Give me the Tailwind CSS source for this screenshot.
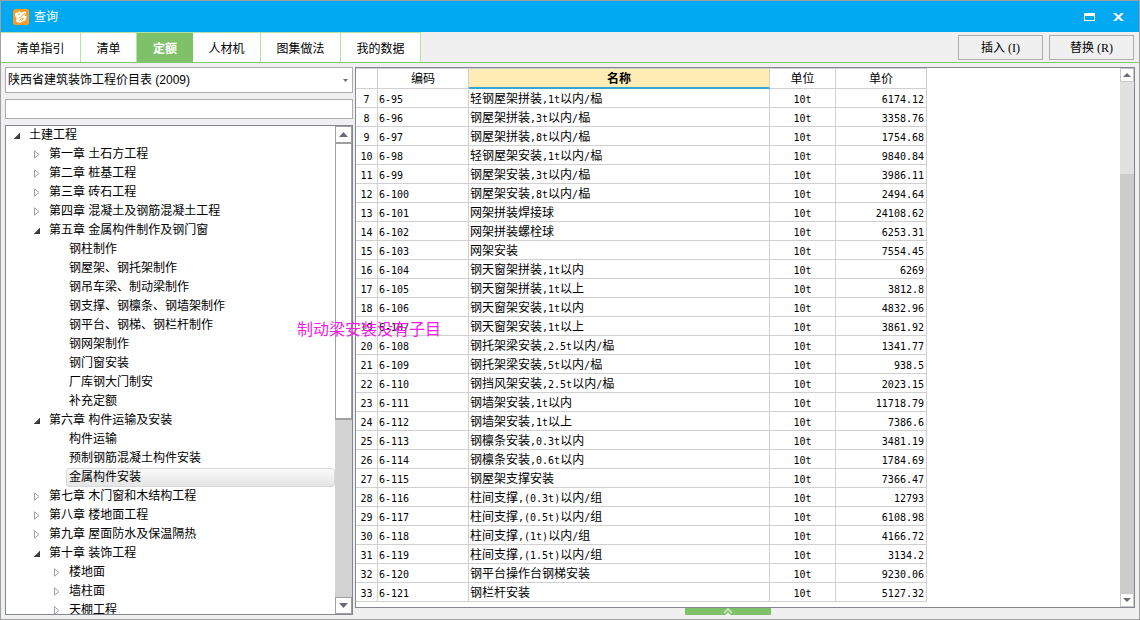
<!DOCTYPE html>
<html lang="zh-CN">
<head>
<meta charset="utf-8">
<title>查询</title>
<script src="https://cdn.jsdelivr.net/npm/@tailwindcss/browser@4"></script>
</head>
<body class="relative flex h-screen flex-col overflow-hidden border border-[#a0a0a0] bg-[#f0f0f0] font-['Liberation_Sans','Noto_Sans_CJK_SC',sans-serif] text-[12px] leading-[18px] text-black">

<header class="flex h-[31px] shrink-0 items-center bg-[#00a9f1] pr-[14px] pl-3 text-white">
  <svg class="h-4 w-4" viewBox="0 0 16 16" aria-hidden="true">
    <rect width="16" height="16" rx="2.5" fill="#fb9d25"/>
    <path d="M2 4.500 6.500 2.200 8 3.600 12 2.400l1.500 1.400-2.300 2.600 2.600 1-1.600 4.200L6.500 14 3 12.400l.6-3.600L2.200 7z" fill="#fff"/>
    <path d="M4.500 5.600 7 4.800M12 4.200 5.600 9.600M6 12l2.600-2.600 1.800.2L8 12" fill="none" stroke="#fb9d25" stroke-width=".9"/>
  </svg>
  <h1 class="ml-[5px]">查询</h1>
  <div class="ml-auto flex items-center gap-[18px]">
    <button type="button" aria-label="最大化"><svg class="block" width="11" height="8" viewBox="0 0 11 8"><path d="M0 0h11v8H0zM1 3v4h9V3z" fill="#fff" fill-rule="evenodd"/></svg></button>
    <button type="button" aria-label="关闭" class="mr-[1px]"><svg class="block" width="11" height="8" viewBox="0 0 11 8"><path d="M0 0h3l2.500 2.500L8 0h3L7 4l4 4H8L5.500 5.500 3 8H0l4-4z" fill="#fff"/></svg></button>
  </div>
</header>

<div class="flex h-[31px] shrink-0 items-stretch border-b border-[#7fc66d]">
  <nav class="flex border-t border-[#b5e3a6]">
    <button type="button" class="w-20 border-r border-[#b5e3a6] bg-white pt-[2px]">清单指引</button>
    <button type="button" class="w-14 border-r border-[#b5e3a6] bg-white pt-[2px]">清单</button>
    <button type="button" class="w-14 bg-[#7fc169] pt-[2px] font-bold text-white">定额</button>
    <button type="button" class="w-[68px] border-r border-[#b5e3a6] bg-white pt-[2px]">人材机</button>
    <button type="button" class="w-20 border-r border-[#b5e3a6] bg-white pt-[2px]">图集做法</button>
    <button type="button" class="w-20 border-r border-[#b5e3a6] bg-white pt-[2px]">我的数据</button>
  </nav>
  <div class="ml-auto flex gap-[6px] pt-[3px] pr-[5px] pb-[2px] font-['Liberation_Serif','Noto_Sans_CJK_SC',serif]">
    <button type="button" class="w-[85px] border border-[#adadad]">插入 (I)</button>
    <button type="button" class="w-[85px] border border-[#adadad]">替换 (R)</button>
  </div>
</div>

<main class="flex min-h-0 flex-1 gap-[2px] px-1 pt-1 pb-1">
  <section class="flex w-[348px] shrink-0 flex-col gap-[6px]">
    <div class="relative">
      <select aria-label="定额库" class="block h-[26px] w-full appearance-none border border-[#adadad] bg-white pl-[2px] outline-none">
        <option>陕西省建筑装饰工程价目表 (2009)</option>
      </select>
      <svg class="pointer-events-none absolute top-3 right-[5px]" width="5" height="3" viewBox="0 0 5 3"><path d="M0 0h5L2.500 3z" fill="#6b6b78"/></svg>
    </div>
    <input type="text" aria-label="搜索" class="h-5 w-full shrink-0 border border-[#adadad] bg-white px-1 outline-none">
    <div class="flex min-h-0 flex-1 border border-[#828790] bg-white">
      <ul id="tree" class="min-w-0 flex-1 overflow-hidden"></ul>
      <div class="flex w-[17px] flex-col bg-[#d3d3d3]">
        <button type="button" aria-label="向上" class="flex h-[17px] shrink-0 items-center justify-center border border-[#a0a0a0] bg-white"><svg width="9" height="5" viewBox="0 0 9 5"><path d="M4.500 0 9 5H0z" fill="#6b6b78"/></svg></button>
        <div class="h-[277px] shrink-0 border border-b-2 border-[#a0a0a0] bg-white"></div>
        <button type="button" aria-label="向下" class="mt-auto flex h-[17px] shrink-0 items-center justify-center border border-[#a0a0a0] bg-white"><svg width="9" height="5" viewBox="0 0 9 5"><path d="M0 0h9L4.500 5z" fill="#6b6b78"/></svg></button>
      </div>
    </div>
  </section>

  <section class="flex min-w-0 flex-1 flex-col">
    <div class="flex min-h-0 flex-1 border border-[#828790] bg-white">
      <div class="min-w-0 flex-1 overflow-hidden">
        <table class="w-[571px] table-fixed border-separate border-spacing-0 border-t border-[#d0d0d0] leading-4">
          <colgroup><col class="w-[22px]"><col class="w-[91px]"><col class="w-[301px]"><col class="w-[66px]"><col class="w-[91px]"></colgroup>
          <thead>
            <tr class="h-5">
              <th class="border-r border-b border-[#d0d0d0] p-0" aria-label="序号"></th>
              <th class="border-r border-b border-[#d0d0d0] p-0 pt-[1px] font-normal">编码</th>
              <th class="border-r border-b-2 border-r-[#d0d0d0] border-b-[#35a5d5] bg-[#ffedb5] p-0 pt-[2px] font-bold">名称</th>
              <th class="border-r border-b border-[#d0d0d0] p-0 pt-[1px] font-normal">单位</th>
              <th class="border-r border-b border-[#d0d0d0] p-0 pt-[1px] font-normal">单价</th>
            </tr>
          </thead>
          <tbody id="rows"></tbody>
        </table>
      </div>
      <div class="flex w-[14px] shrink-0 flex-col bg-[#e1e1e1]">
        <button type="button" aria-label="向上滚动" class="flex h-[14px] shrink-0 items-center justify-center border border-[#c8c8c8] bg-white"><svg width="8" height="4" viewBox="0 0 8 4"><path d="M4 0l4 4H0z" fill="#6b6b78"/></svg></button>
        <div class="h-[92px] shrink-0"></div>
        <div class="min-h-0 flex-1 bg-[#cbcbcb]"></div>
        <button type="button" aria-label="向下滚动" class="flex h-[14px] shrink-0 items-center justify-center border border-[#c8c8c8] bg-white"><svg width="8" height="4" viewBox="0 0 8 4"><path d="M0 0h8L4 4z" fill="#6b6b78"/></svg></button>
      </div>
    </div>
    <div class="flex h-[7px] shrink-0 justify-center pr-[34px]">
      <button type="button" aria-label="展开" class="flex w-[86px] justify-center bg-[#7fc169]"><svg width="10" height="7" viewBox="0 0 10 7"><path d="M1 5 5 1l4 4" fill="none" stroke="#d3ecca" stroke-width="1.500"/><path d="M2.500 7 5 4.300 7.500 7z" fill="#fff"/></svg></button>
    </div>
  </section>
</main>

<p class="pointer-events-none absolute top-[317px] left-[296px] text-[16px] leading-6 text-[#f01ee6]">制动梁安装没有子目</p>

<script>
// Tree entries: depth, state (o = open, c = closed, - = leaf, s = selected leaf), label
const tree = `0|o|土建工程
1|c|第一章 土石方工程
1|c|第二章 桩基工程
1|c|第三章 砖石工程
1|c|第四章 混凝土及钢筋混凝土工程
1|o|第五章 金属构件制作及钢门窗
2|-|钢柱制作
2|-|钢屋架、钢托架制作
2|-|钢吊车梁、制动梁制作
2|-|钢支撑、钢檩条、钢墙架制作
2|-|钢平台、钢梯、钢栏杆制作
2|-|钢网架制作
2|-|钢门窗安装
2|-|厂库钢大门制安
2|-|补充定额
1|o|第六章 构件运输及安装
2|-|构件运输
2|-|预制钢筋混凝土构件安装
2|s|金属构件安装
1|c|第七章 木门窗和木结构工程
1|c|第八章 楼地面工程
1|c|第九章 屋面防水及保温隔热
1|o|第十章 装饰工程
2|c|楼地面
2|c|墙柱面
2|c|天棚工程`.split('\n').map(l => l.split('|'));
const indent = ['pl-[6px]', 'pl-[26px]', 'pl-[46px]'];
const open = '<button type="button" aria-label="折叠" class="flex h-4 w-[10px] shrink-0 items-center justify-center"><svg width="6" height="6" viewBox="0 0 6 6"><path d="M6 0v6H0z" fill="#404040" stroke="#262626" stroke-width=".5"/></svg></button>';
const closed = '<button type="button" aria-label="展开" class="flex h-4 w-[10px] shrink-0 items-center justify-center"><svg width="6" height="9" viewBox="0 0 6 9"><path d="M.5 .8v7.400L5 4.500z" fill="#fff" stroke="#a0a0a0"/></svg></button>';
document.getElementById('tree').innerHTML = tree.map(([d, s, t]) => {
  const mark = s === 'o' ? open : s === 'c' ? closed : '<span class="w-[8px] shrink-0"></span>';
  const label = s === 's'
    ? '<span class="ml-[6px] flex h-[19px] flex-1 items-center rounded-[3px] border border-[#d9d9d9] bg-linear-to-b from-[#fafafa] to-[#e5e5e5] pl-[2px] leading-[17px]">' + t + '</span>'
    : '<span class="' + (s === '-' ? 'pl-[9px]' : 'pl-[7px]') + ' leading-[17px]">' + t + '</span>';
  return '<li class="flex h-[19px] items-center whitespace-nowrap ' + indent[d] + '">' + mark + label + '</li>';
}).join('');

const items = `轻钢屋架拼装,1t以内/榀|6174.12
钢屋架拼装,3t以内/榀|3358.76
钢屋架拼装,8t以内/榀|1754.68
轻钢屋架安装,1t以内/榀|9840.84
钢屋架安装,3t以内/榀|3986.11
钢屋架安装,8t以内/榀|2494.64
网架拼装焊接球|24108.62
网架拼装螺栓球|6253.31
网架安装|7554.45
钢天窗架拼装,1t以内|6269
钢天窗架拼装,1t以上|3812.8
钢天窗架安装,1t以内|4832.96
钢天窗架安装,1t以上|3861.92
钢托架梁安装,2.5t以内/榀|1341.77
钢托架梁安装,5t以内/榀|938.5
钢挡风架安装,2.5t以内/榀|2023.15
钢墙架安装,1t以内|11718.79
钢墙架安装,1t以上|7386.6
钢檩条安装,0.3t以内|3481.19
钢檩条安装,0.6t以内|1784.69
钢屋架支撑安装|7366.47
柱间支撑,(0.3t)以内/组|12793
柱间支撑,(0.5t)以内/组|6108.98
柱间支撑,(1t)以内/组|4166.72
柱间支撑,(1.5t)以内/组|3134.2
钢平台操作台钢梯安装|9230.06
钢栏杆安装|5127.32`.split('\n').map(l => l.split('|'));
// Half-width characters take exactly half of a 12px ideograph
const half = s => s.replace(/[!-~]+/g, m => `<span class="font-['DejaVu_Sans_Mono',monospace] text-[10px] leading-none">${m}</span>`);
const cell = 'border-r border-b border-[#d0d0d0] p-0 pt-[1px] ';
document.getElementById('rows').innerHTML = items.map(([n, p], i) =>
  '<tr class="h-[19px] whitespace-nowrap">' +
  '<td class="' + cell + 'text-center">' + half(String(i + 7)) + '</td>' +
  '<td class="' + cell + 'pl-[1px]">' + half('6-' + (i + 95)) + '</td>' +
  '<td class="' + cell + 'pl-[1px]">' + half(n) + '</td>' +
  '<td class="' + cell + 'text-center">' + half('10t') + '</td>' +
  '<td class="' + cell + 'pr-[2px] text-right">' + half(p) + '</td></tr>').join('');
</script>
</body>
</html>
